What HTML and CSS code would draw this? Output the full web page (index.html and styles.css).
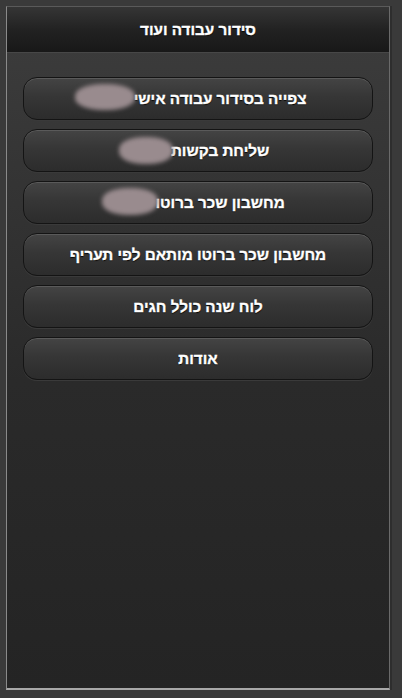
FILE: index.html
```html
<!DOCTYPE html>
<html lang="he" dir="rtl">
<head>
<meta charset="utf-8">
<link rel="stylesheet" href="styles.css">
</head>
<body>
<div class="frame">
  <header class="header"><h1 class="title">סידור עבודה ועוד</h1></header>
  <main class="content">
    <a class="btn"><span class="label">צפייה בסידור עבודה אישי <span class="hidden"></span></span><span class="blur blur1"></span></a>
    <a class="btn"><span class="label">שליחת בקשות <span class="hidden"></span></span><span class="blur blur2"></span></a>
    <a class="btn"><span class="label">מחשבון שכר ברוטו <span class="hidden"></span></span><span class="blur blur3"></span></a>
    <a class="btn"><span class="label">מחשבון שכר ברוטו מותאם לפי תעריף</span></a>
    <a class="btn"><span class="label">לוח שנה כולל חגים</span></a>
    <a class="btn"><span class="label">אודות</span></a>
  </main>
</div>
</body>
</html>
```

FILE: styles.css
```css
html, body {
  margin: 0;
  padding: 0;
}
body {
  width: 402px;
  height: 698px;
  background: #3a3a3a;
  font-family: "Liberation Sans", Arial, sans-serif;
  padding: 6px 12px 8px 6px;
  box-sizing: border-box;
  overflow: hidden;
}
.frame {
  height: 684px;
  box-sizing: border-box;
  border-left: 1px solid #8a8a8a;
  border-top: 1px solid #5a5a5a;
  border-right: 1px solid #6a6a6a;
  border-bottom: 2px solid #a8a8a8;
  background: linear-gradient(to bottom, #3d3d3d 0%, #2a2a2a 55%, #242424 100%);
  display: flex;
  flex-direction: column;
  box-shadow: 2px 0 0 #2e2e2e;
}
.header {
  height: 45px;
  background: linear-gradient(to bottom, #353535 0%, #222 50%, #181818 100%);
  border-bottom: 1px solid #474747;
  display: flex;
  align-items: center;
  justify-content: center;
}
.title {
  margin: 0;
  font-size: 15.25px;
  font-weight: bold;
  color: #fff;
  -webkit-text-stroke: 0.35px #fff;
  text-shadow: 0 1px 1px #000;
}
.content {
  padding: 24px 16px 0;
  display: flex;
  flex-direction: column;
  gap: 9px;
}
.btn {
  position: relative;
  height: 43px;
  box-sizing: border-box;
  border: 1px solid #141414;
  border-radius: 14px;
  background: linear-gradient(to bottom, #444 0%, #363636 45%, #2c2c2c 100%);
  box-shadow: inset 0 1px 0 #5a5a5a, 0 1px 0 #3a3a3a;
  display: flex;
  align-items: center;
  justify-content: center;
  overflow: hidden;
}
.label {
  font-size: 15.25px;
  font-weight: bold;
  color: #fff;
  -webkit-text-stroke: 0.35px #fff;
  text-shadow: 0 1px 1px #000;
  white-space: nowrap;
}
.hidden {
  display: inline-block;
  width: 40px;
}
.blur {
  position: absolute;
  background: #998b8e;
  border-radius: 45%;
  filter: blur(2px);
}
.blur1 { left: 51px; top: 6px; width: 60px; height: 26px; }
.blur2 { left: 95px; top: 7px; width: 54px; height: 27px; }
.blur3 { left: 78px; top: 6px; width: 56px; height: 27px; }
```
